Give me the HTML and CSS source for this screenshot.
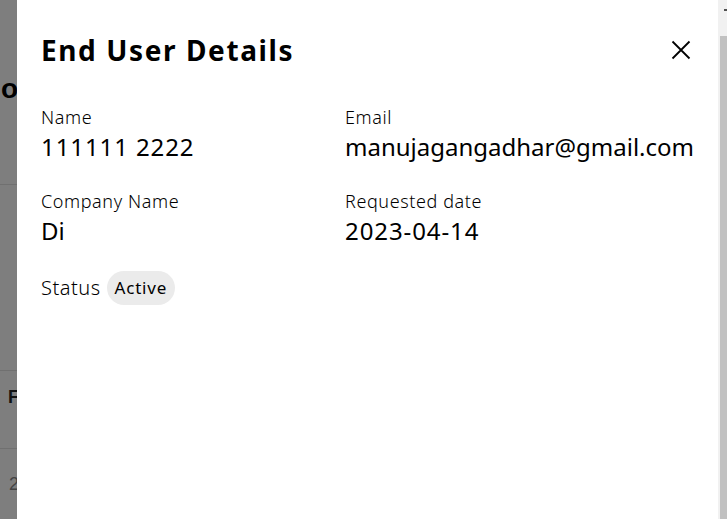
FILE: index.html
```html
<!DOCTYPE html>
<html>
<head>
<meta charset="utf-8">
<link rel="stylesheet" href="styles.css">
</head>
<body>
<div class="page">
  <div class="backdrop">
    <div class="bg-title">o</div>
    <div class="bg-line l1"></div>
    <div class="bg-line l2"></div>
    <div class="bg-head">F</div>
    <div class="bg-line l3"></div>
    <div class="bg-cell">2</div>
  </div>
  <div class="dialog">
    <div class="dialog-header">
      <h1 class="dialog-title">End User Details</h1>
      <button class="close-btn" aria-label="Close">
        <svg width="20" height="20" viewBox="0 0 20 20"><path d="M1.5 1.5 L18.5 18.5 M18.5 1.5 L1.5 18.5" stroke="#000" stroke-width="1.8" fill="none"/></svg>
      </button>
    </div>
    <div class="details">
      <div class="field">
        <div class="label">Name</div>
        <div class="value num">111111 2222</div>
      </div>
      <div class="field">
        <div class="label">Email</div>
        <div class="value">manujagangadhar@gmail.com</div>
      </div>
      <div class="field">
        <div class="label">Company Name</div>
        <div class="value">Di</div>
      </div>
      <div class="field">
        <div class="label">Requested date</div>
        <div class="value num">2023-04-14</div>
      </div>
    </div>
    <div class="status-row">
      <span class="status-label">Status</span>
      <span class="chip">Active</span>
    </div>
  </div>
  <div class="scrollbar">
    <div class="scroll-arrow"></div>
    <div class="scroll-thumb"></div>
  </div>
</div>
</body>
</html>
```
FILE: styles.css
```css
html, body {
  margin: 0;
  padding: 0;
  width: 727px;
  height: 519px;
  overflow: hidden;
}
body {
  font-family: "Noto Sans", "Open Sans", sans-serif;
  color: #000;
}
.page {
  display: flex;
  width: 727px;
  height: 519px;
}
.backdrop {
  position: relative;
  width: 17px;
  flex: none;
  background: #7e7e7e;
  overflow: hidden;
}
.bg-title {
  position: absolute;
  left: 1px;
  top: 73px;
  font-weight: 700;
  font-size: 28px;
  line-height: 32px;
  color: #000;
  font-family: "Liberation Sans", sans-serif;
}
.bg-line {
  position: absolute;
  left: 0;
  width: 17px;
  height: 1px;
  background: #707070;
}
.l1 { top: 184px; }
.l2 { top: 370px; }
.l3 { top: 448px; }
.bg-head {
  position: absolute;
  left: 8px;
  top: 387px;
  font-size: 18px;
  line-height: 20px;
  font-weight: 700;
  color: #111;
  font-family: "Liberation Sans", sans-serif;
}
.bg-cell {
  position: absolute;
  left: 9px;
  top: 474px;
  font-size: 18px;
  line-height: 20px;
  color: #444;
  font-family: "Liberation Sans", sans-serif;
}
.dialog {
  width: 701px;
  flex: none;
  background: #fff;
  padding: 23px 24px 0 24px;
  box-sizing: border-box;
}
.dialog-header {
  display: flex;
  justify-content: space-between;
  align-items: center;
  height: 54px;
}
.dialog-title {
  margin: 0;
  font-size: 28px;
  font-weight: 700;
  line-height: 54px;
  letter-spacing: 1.6px;
}
.close-btn {
  border: 0;
  background: none;
  padding: 0;
  margin-right: 3px;
  width: 20px;
  height: 20px;
  display: flex;
}
.details {
  display: grid;
  grid-template-columns: 304px 1fr;
  row-gap: 26px;
  margin-top: 28px;
}
.label {
  font-size: 18px;
  font-weight: 300;
  line-height: 24px;
  letter-spacing: 0.6px;
  color: #000;
}
.value {
  font-size: 24px;
  line-height: 32px;
  margin-top: 2px;
}
.value.num {
  letter-spacing: 0.9px;
}
.status-row {
  display: flex;
  align-items: center;
  gap: 6px;
  margin-top: 24px;
}
.status-label {
  font-size: 20px;
  font-weight: 300;
  letter-spacing: 0.5px;
  line-height: 28px;
}
.chip {
  background: #ebebeb;
  border-radius: 17px;
  padding: 0 8px 0 8px;
  height: 34px;
  line-height: 34px;
  font-size: 17px;
  letter-spacing: 0.8px;
}
.scrollbar {
  flex: 1;
  background: #f1f1f1;
  display: flex;
  flex-direction: column;
  align-items: flex-end;
}
.scroll-arrow {
  height: 36px;
  width: 3px;
  position: relative;
}
.scroll-arrow::after {
  content: "";
  position: absolute;
  left: 0;
  top: 9px;
  width: 3px;
  height: 2px;
  background: #505050;
}
.scroll-thumb {
  width: 7px;
  flex: 1;
  background: #c1c1c1;
}
```
